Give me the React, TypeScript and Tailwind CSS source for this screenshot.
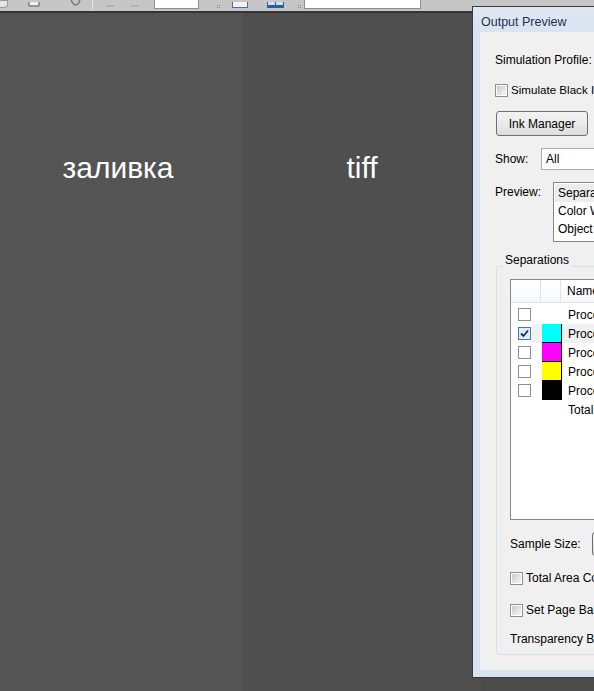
import React from 'react';

const uiFont = { fontFamily: '"Liberation Sans", Arial, sans-serif' };

// Win7-style checkbox
const Check: React.FC<{ checked?: boolean; flat?: boolean }> = ({ checked, flat }) => {
  if (flat) {
    return (
      <div
        className={
          checked
            ? 'w-[13px] h-[13px] border border-[#3c7fb1] bg-[#dcecfc] flex items-center justify-center'
            : 'w-[13px] h-[13px] border border-[#8f8f8f] bg-white'
        }
      >
        {checked && (
          <svg width="9" height="9" viewBox="0 0 9 9">
            <path d="M1 4.5 L3.5 7 L8 1.5" fill="none" stroke="#1f2d3d" strokeWidth="1.8" />
          </svg>
        )}
      </div>
    );
  }
  return (
    <div className="w-[13px] h-[13px] border border-[#8e8f8f] bg-white p-px shrink-0">
      <div className="w-full h-full bg-gradient-to-br from-[#cbcbcb] to-[#f7f7f7]" />
    </div>
  );
};

const Grip: React.FC<{ className?: string }> = ({ className }) => (
  <div className={'grid grid-cols-2 gap-px ' + (className ?? '')}>
    <div className="w-px h-px bg-[#8a8a8a]" />
    <div className="w-px h-px bg-[#8a8a8a]" />
    <div className="w-px h-px bg-[#8a8a8a]" />
    <div className="w-px h-px bg-[#8a8a8a]" />
  </div>
);

const Toolbar: React.FC = () => (
  <div className="h-[13px] bg-[#c6c6c6] border-b-2 border-[#353535] relative overflow-hidden flex items-end">
    {/* icon stubs, cut off by the top edge */}
    <div className="w-[8px] h-[8px] rounded-br-sm bg-[#e6e6e6] border border-[#9a9a9a] border-l-0 mb-[3px]" />
    <svg className="ml-[20px] mb-[3px]" width="12" height="6" viewBox="0 0 12 6">
      <path d="M1 0 V4 H11 V0" fill="#eeeeee" stroke="#555" />
    </svg>
    <svg className="ml-[28px] mb-[3px]" width="14" height="8" viewBox="0 0 14 8">
      <path d="M3 0 Q6 7 10 4 L12 0" fill="none" stroke="#7a7a7a" strokeWidth="1.5" />
    </svg>
    <div className="ml-[10px] w-px h-[11px] bg-[#a8a8a8] border-r border-[#e2e2e2]" />
    <div className="ml-[13px] mb-[4px] w-[8px] h-[2px] bg-[#b2b2b2]" />
    <div className="ml-[17px] mb-[4px] w-[8px] h-[2px] bg-[#b2b2b2]" />
    <div className="ml-[15px] mb-[2px] w-[45px] h-[9px] bg-white border border-[#8f8f8f] border-t-0" />
    <Grip className="ml-[18px] mb-[3px]" />
    <div className="ml-[12px] mb-[3px] w-[16px] h-[6px] bg-[#f4f4f4] border border-[#3f6fa8] border-t-0" />
    <svg className="ml-[19px] mb-[3px]" width="17" height="6" viewBox="0 0 17 6">
      <rect x="0.5" y="-1" width="16" height="6.5" fill="#cfe0f4" stroke="#2b5d9a" />
      <line x1="8.5" y1="0" x2="8.5" y2="6" stroke="#2b5d9a" />
      <rect x="1" y="3" width="15" height="2" fill="#2b5d9a" />
    </svg>
    <Grip className="ml-[14px] mb-[3px]" />
    <div className="ml-[3px] mb-[2px] w-[117px] h-[9px] bg-white border border-[#8f8f8f] border-t-0" />
  </div>
);

const swatches = ['', '#00ffff', '#ff00ff', '#ffff00', '#000000', ''];
const plates = ['Process Plates', 'Process Cyan', 'Process Magenta', 'Process Yellow', 'Process Black', 'Total Ink'];

const OutputPreview: React.FC = () => (
  <div
    className="absolute left-[472px] top-[6px] w-[300px] h-[672px] border border-[#3a3a3a] bg-[#d9e4f1] flex flex-col"
    style={uiFont}
  >
    <div className="h-[25px] flex items-center pl-[8px] pt-[5px] text-[12.5px] text-[#1e3150] bg-gradient-to-b from-[#dfe8f3] to-[#d9e4f1]">
      Output Preview
    </div>
    <div className="ml-[7px] flex-1 mb-[7px] bg-[#f0f0f0] flex flex-col pl-[15px] text-[12px] text-black whitespace-nowrap">
      <div className="mt-[20px] h-[16px] flex items-center">Simulation Profile:</div>

      <div className="mt-[14px] h-[16px] flex items-center gap-[3px] text-[11.6px]">
        <Check />
        <span>Simulate Black Ink</span>
      </div>

      <div className="mt-[13px] ml-px w-[92px] h-[25px] rounded-[3px] border border-[#707070] bg-gradient-to-b from-[#f2f2f2] via-[#ebebeb] to-[#dcdcdc] flex items-center justify-center">
        Ink Manager
      </div>

      <div className="mt-[12px] h-[22px] flex items-center">
        <span className="w-[46px]">Show:</span>
        <div className="w-[200px] h-[22px] border border-[#abadb3] bg-white flex items-center pl-[4px]">All</div>
      </div>

      <div className="mt-[12px] h-[60px] flex items-start">
        <span className="w-[58px] pt-px">Preview:</span>
        <div className="w-[200px] h-[60px] border border-[#828790] bg-white p-px flex flex-col">
          <div className="h-[18px] flex items-center pl-[3px] bg-[#ececec]">Separations</div>
          <div className="h-[18px] flex items-center pl-[3px]">Color Warnings</div>
          <div className="h-[18px] flex items-center pl-[3px]">Object Inspector</div>
        </div>
      </div>

      <div className="mt-[24px] ml-px relative h-[389px] border border-[#d5dfe5] rounded-[3px] flex flex-col pl-[13px] pt-[12px]">
        <span className="absolute left-[6px] top-[-14px] px-[2px] bg-[#f0f0f0] leading-[14px]">Separations</span>

        <div className="h-[241px] border border-[#828790] bg-white flex flex-col">
          <div className="h-[23px] flex border-b border-[#e3e3e3] bg-gradient-to-b from-white to-[#f7f8fa]">
            <div className="w-[30px] border-r border-[#e3e3e3]" />
            <div className="w-[20px] border-r border-[#e3e3e3]" />
            <div className="pl-[6px] flex items-center">Name</div>
          </div>
          <div className="mt-[2px] flex flex-col">
            {plates.map((p, i) => (
              <div key={p} className="h-[19px] flex items-center">
                <div className="w-[21px] flex justify-end pr-px">
                  {i < 5 && <Check flat checked={i === 1} />}
                </div>
                <div className={i === 1 ? 'flex-1 h-full flex items-center bg-[#f0f0f0] pl-[10px]' : 'flex-1 h-full flex items-center pl-[10px]'}>
                  <div
                    className={swatches[i] ? 'w-[20px] h-[19px] border-r border-b border-black' : 'w-[20px] h-[19px]'}
                    style={swatches[i] ? { backgroundColor: swatches[i] } : undefined}
                  />
                  <span className="pl-[6px]">{p}</span>
                </div>
              </div>
            ))}
          </div>
        </div>

        <div className="mt-[12px] h-[24px] flex items-center">
          <span className="w-[82px]">Sample Size:</span>
          <div className="w-[120px] h-[24px] border border-[#707070] rounded-[3px] bg-gradient-to-b from-[#f2f2f2] to-[#dcdcdc]" />
        </div>

        <div className="mt-[14px] h-[16px] flex items-center gap-[3px]">
          <Check />
          <span>Total Area Coverage</span>
        </div>

        <div className="mt-[16px] h-[16px] flex items-center gap-[3px]">
          <Check />
          <span>Set Page Background Color</span>
        </div>

        <div className="mt-[13px] h-[16px] flex items-center">Transparency Blending Space</div>
      </div>
    </div>
  </div>
);

export default function App() {
  return (
    <div className="w-[594px] h-[691px] relative overflow-hidden bg-[#4b4b4b] flex flex-col">
      <Toolbar />
      <div className="flex-1 flex">
        <div
          className="w-[243px] bg-[#545454] flex justify-center pr-[7px] pt-[138px] text-white text-[30px] leading-[34px]"
          style={uiFont}
        >
          заливка
        </div>
        <div
          className="w-[238px] bg-[#4f4f4f] flex justify-center pt-[138px] text-white text-[30px] leading-[34px]"
          style={uiFont}
        >
          tiff
        </div>
        <div className="flex-1 bg-[#4b4b4b]" />
      </div>
      <OutputPreview />
    </div>
  );
}
